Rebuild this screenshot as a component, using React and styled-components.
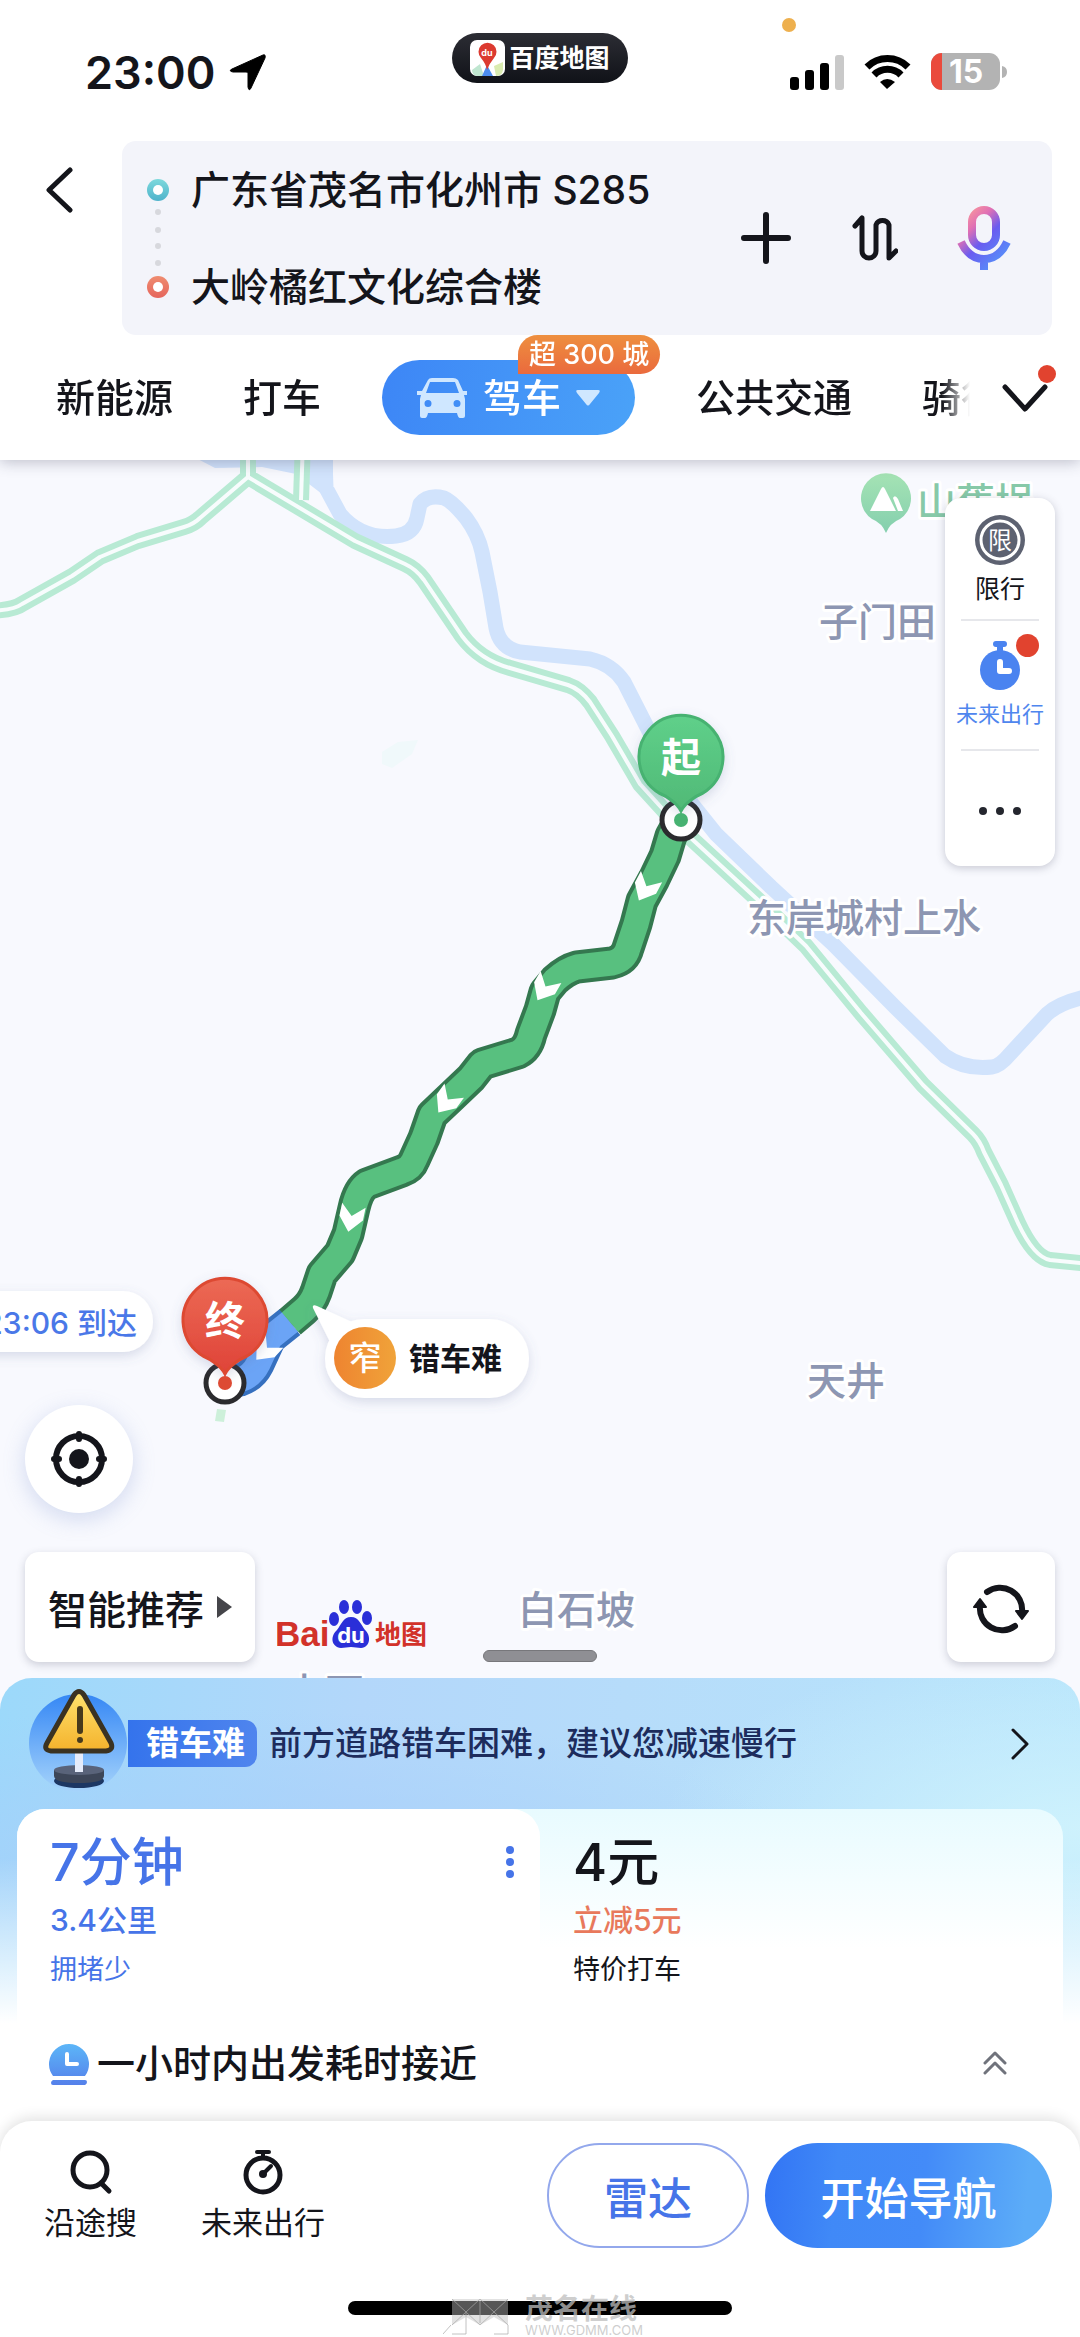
import React, { useState } from 'react';
import styled, { createGlobalStyle, css } from 'styled-components';

const font = `Inter, "Noto Sans CJK SC", sans-serif`;

const GlobalStyle = createGlobalStyle`
  * { box-sizing: border-box; }
  body { margin: 0; background: #fff; color: #14151b; font-family: ${font}; }
  button, input { font: inherit; color: inherit; background: none; border: 0; padding: 0; margin: 0; }
  button { cursor: pointer; }
  svg { display: block; flex: none; }
`;

const Page = styled.main`
  display: flex;
  flex-direction: column;
  min-height: 100vh;
  overflow: hidden;
`;

/* ---------- header ---------- */

const Header = styled.header`
  position: relative;
  z-index: 2;
  background: #fff;
  box-shadow: 0 2px 14px rgba(60, 62, 90, 0.32);
`;

const StatusBar = styled.div`
  display: grid;
  grid-template-columns: 1fr auto 1fr;
  height: 141px;
  padding: 33px 73px 0;
`;

const StatusSide = styled.div`
  display: flex;
  align-items: center;
  justify-content: ${(p) => (p.$end ? 'flex-end' : 'flex-start')};
  gap: ${(p) => (p.$end ? '20px' : '14px')};
  height: 78px;
  padding-left: 12px;
`;

const Clock = styled.time`
  font-size: 45px;
  font-weight: 600;
`;

const Island = styled.div`
  display: flex;
  align-items: center;
  gap: 4px;
  height: 50px;
  padding: 0 18px;
  border-radius: 25px;
  background: linear-gradient(#2c2d34, #101218);
  color: #fff;
  font-size: 25px;
  font-weight: 700;
  line-height: 50px;
`;

const MicDot = styled.i`
  position: absolute;
  top: 18px;
  right: 284px;
  width: 14px;
  height: 14px;
  border-radius: 50%;
  background: #eeb04e;
`;

const SearchRow = styled.div`
  display: flex;
  align-items: flex-start;
  padding-right: 28px;
`;

const BackButton = styled.button`
  display: flex;
  align-items: center;
  justify-content: center;
  width: 122px;
  height: 97px;
  padding-right: 5px;
`;

const SearchBox = styled.div`
  display: flex;
  align-items: center;
  flex: 1;
  min-width: 0;
  height: 194px;
  padding: 0 14px 0 24px;
  border-radius: 14px;
  background: #f3f4fa;
`;

const Stops = styled.div`
  display: flex;
  flex-direction: column;
  flex: 1;
  min-width: 0;
  padding-left: 21px;
`;

const StopInput = styled.input`
  width: 100%;
  height: 97px;
  padding-bottom: 5px;
  font-size: 39px;
  font-weight: 500;
  outline: 0;
`;

const ActionButton = styled.button`
  display: flex;
  align-items: center;
  justify-content: center;
  flex: none;
  width: 109px;
  height: 109px;
`;

const TabRow = styled.nav`
  display: flex;
  height: 125px;
`;

const TabList = styled.div`
  display: flex;
  align-items: center;
  gap: 60px;
  flex: 1;
  min-width: 0;
  padding-left: 51px;
  overflow: hidden;
  mask-image: linear-gradient(to left, transparent, #000 28px);
`;

const Tab = styled.button`
  position: relative;
  flex: none;
  padding: 0 5px;
  font-size: 39px;
  font-weight: 500;
  line-height: 75px;
  white-space: nowrap;
  ${(p) =>
    p.$active &&
    css`
      display: flex;
      align-items: center;
      gap: 15px;
      margin: 0 -4px;
      padding: 0 35px;
      border-radius: 38px;
      color: #fff;
      background: linear-gradient(100deg, #3d86f6, #4aa2f8);
    `}
`;

const PromoBadge = styled.span`
  position: absolute;
  top: -25px;
  left: 136px;
  padding: 0 11px;
  border-radius: 20px 20px 20px 0;
  background: linear-gradient(#ee8f3f, #ea6a3d);
  font-size: 27px;
  line-height: 39px;
`;

const MoreButton = styled.button`
  position: relative;
  display: flex;
  align-items: center;
  justify-content: center;
  width: 110px;
`;

const RedDot = styled.i`
  position: absolute;
  top: ${(p) => p.$top}px;
  right: ${(p) => p.$right}px;
  width: ${(p) => p.$size}px;
  height: ${(p) => p.$size}px;
  border-radius: 50%;
  background: #e1432f;
`;

/* ---------- map ---------- */

const MapArea = styled.section`
  position: relative;
  flex: 1;
  min-height: 1250px;
  background: #f8f9fe;
`;

const MapCanvas = styled.svg`
  position: absolute;
  inset: 0;
  width: 100%;
  height: 100%;
`;

const PlaceName = styled.text`
  font-family: ${font};
  font-size: 39px;
  font-weight: 500;
  fill: ${(p) => p.$color || '#8d96b2'};
  stroke: #fff;
  stroke-width: 6px;
  stroke-linejoin: round;
  paint-order: stroke;
`;

const PinText = styled.text`
  font-family: ${font};
  font-size: ${(p) => p.$size || 40}px;
  font-weight: ${(p) => p.$weight || 500};
  fill: ${(p) => p.$color || '#fff'};
  text-anchor: ${(p) => p.$anchor || 'middle'};
`;

const Overlay = styled.div`
  position: relative;
  display: flex;
  flex-direction: column;
  justify-content: space-between;
  height: 100%;
  min-height: 1250px;
  padding: 38px 25px 48px;
`;

const ToolPanel = styled.div`
  display: flex;
  flex-direction: column;
  align-items: center;
  align-self: flex-end;
  width: 110px;
  height: 368px;
  border-radius: 16px;
  background: #fff;
  box-shadow: 0 2px 8px rgba(50, 55, 80, 0.25);
`;

const PanelButton = styled.button`
  position: relative;
  display: flex;
  flex-direction: column;
  align-items: center;
  justify-content: ${(p) => (p.$center ? 'center' : 'flex-start')};
  width: 100%;
  height: ${(p) => p.$height}px;
  padding-top: ${(p) => p.$top || 0}px;
  font-size: ${(p) => (p.$blue ? 22 : 25)}px;
  line-height: 46px;
  color: ${(p) => (p.$blue ? '#4f86ee' : '#14151b')};
`;

const Rule = styled.i`
  width: 78px;
  height: 2px;
  background: #e6e7eb;
`;

const MapFooter = styled.div`
  display: flex;
  align-items: flex-end;
  gap: 22px;
`;

const FooterLeft = styled.div`
  display: flex;
  flex-direction: column;
  gap: 39px;
`;

const LocateButton = styled.button`
  display: flex;
  align-items: center;
  justify-content: center;
  width: 108px;
  height: 108px;
  border-radius: 50%;
  background: #fff;
  box-shadow: 0 6px 22px rgba(110, 135, 200, 0.28);
`;

const FloatCard = styled.button`
  display: flex;
  align-items: center;
  justify-content: center;
  gap: 13px;
  flex: none;
  width: ${(p) => p.$width}px;
  height: 110px;
  border-radius: 14px;
  background: #fff;
  box-shadow: 0 3px 9px rgba(50, 55, 80, 0.22);
  font-size: 39px;
  font-weight: 500;
`;

const LogoSlot = styled.div`
  flex: 1;
  padding-bottom: 13px;
`;

const DragHandle = styled.i`
  position: absolute;
  bottom: 48px;
  left: 50%;
  width: 114px;
  height: 12px;
  margin-left: -57px;
  border: 1px solid #77777b;
  border-radius: 6px;
  background: #8f8f94;
`;

/* ---------- bottom sheet ---------- */

const Sheet = styled.section`
  position: relative;
  margin-top: -32px;
  border-radius: 32px 32px 0 0;
  background:
    linear-gradient(rgba(255, 255, 255, 0) 180px, #fff 345px),
    radial-gradient(600px 160px at 20% 190px, rgba(166, 207, 250, 0.9), rgba(166, 207, 250, 0)),
    radial-gradient(420px 180px at 100% 150px, rgba(208, 243, 253, 0.9), rgba(208, 243, 253, 0)),
    linear-gradient(95deg, #9cd9fa, #b3d7fa 32%, #b6dcfa 55%, #b8e6fc);
`;

const AlertButton = styled.button`
  display: flex;
  align-items: center;
  width: 100%;
  height: 131px;
  padding: 0 48px 0 28px;
  text-align: left;
`;

const AlertTag = styled.span`
  padding: 0 12px 0 18px;
  border-radius: 0 12px 12px 0;
  background: linear-gradient(95deg, #3473ec, #5085ee);
  color: #fff;
  font-size: 33px;
  font-weight: 700;
  line-height: 47px;
`;

const AlertText = styled.span`
  flex: 1;
  padding-left: 12px;
  color: #1d2c5c;
  font-size: 33px;
  font-weight: 500;
  line-height: 47px;
`;

const Card = styled.div`
  margin: 0 17px;
  border-radius: 28px 28px 0 0;
  background: linear-gradient(#e8fbff, #fff 140px);
`;

const Plans = styled.div`
  display: grid;
  grid-template-columns: 1fr 1fr;
`;

const Plan = styled.button`
  position: relative;
  display: flex;
  flex-direction: column;
  height: 196px;
  padding: 25px 33px 0;
  text-align: left;
  border-radius: 28px 28px 0 0;
  color: ${(p) => (p.$active ? '#4674e8' : '#14151b')};
  background: ${(p) => (p.$active ? '#fff' : 'transparent')};
`;

const PlanTitle = styled.strong`
  font-size: 52px;
  font-weight: 500;
  line-height: 58px;
`;

const PlanSub = styled.span`
  font-size: 30px;
  font-weight: 500;
  line-height: 56px;
  color: ${(p) => p.$color || 'inherit'};
`;

const PlanNote = styled.span`
  font-size: 27px;
  line-height: 44px;
`;

const Kebab = styled.svg`
  position: absolute;
  top: 36px;
  right: 24px;
`;

const DepartRow = styled.button`
  display: flex;
  align-items: center;
  gap: 7px;
  width: 100%;
  height: 116px;
  padding: 0 56px 0 32px;
  background: #fff;
  font-size: 38px;
  font-weight: 500;
`;

const DepartText = styled.span`
  flex: 1;
  padding-bottom: 5px;
  text-align: left;
`;

const BottomBar = styled.footer`
  position: relative;
  display: flex;
  flex-direction: column;
  align-items: center;
  gap: 53px;
  padding: 22px 0;
  border-radius: 32px 32px 0 0;
  background: #fff;
  box-shadow: 0 -3px 14px rgba(0, 0, 0, 0.12);
`;

const BottomRow = styled.div`
  display: flex;
  gap: 16px;
  width: 100%;
  padding: 0 28px 0 44px;
`;

const QuickActions = styled.div`
  display: flex;
  flex: 1;
  gap: 64px;
`;

const QuickButton = styled.button`
  display: flex;
  flex-direction: column;
  align-items: center;
  gap: 6px;
  padding-top: 4px;
  font-size: 31px;
  line-height: 44px;
`;

const PillButton = styled.button`
  width: ${(p) => (p.$primary ? 287 : 202)}px;
  height: 105px;
  border-radius: 53px;
  border: ${(p) => (p.$primary ? '0' : '2px solid #93a8ec')};
  background: ${(p) =>
    p.$primary ? 'linear-gradient(95deg, #3274f4, #4089f7 25%, #438bf8 55%, #5cacf8 90%)' : '#fff'};
  color: ${(p) => (p.$primary ? '#fff' : '#4674e8')};
  font-size: 44px;
  font-weight: 500;
`;

const HomeIndicator = styled.i`
  width: 384px;
  height: 14px;
  border-radius: 7px;
  background: #000;
`;

const Watermark = styled.div`
  position: absolute;
  bottom: 0;
  left: 50%;
  display: flex;
  align-items: flex-end;
  gap: 15px;
  margin-left: -97px;
  color: rgba(190, 190, 190, 0.75);
`;

const WatermarkText = styled.div`
  display: flex;
  flex-direction: column;
  font-size: 13px;
  line-height: 14px;

  b {
    font-size: 28px;
    font-weight: 700;
    line-height: 28px;
  }
`;

const stroke = {
  fill: 'none',
  stroke: '#14151b',
  strokeLinecap: 'round',
  strokeLinejoin: 'round',
};

const greenRoads = [
  'M248 440V477L355 541L405 564Q416 569 424 580L462 636Q480 660 510 668L568 685Q580 689 590 702L612 736L640 784L680 828L758 900L806 946L861 1013L923 1085L973 1134Q980 1141 984 1152L1001 1185L1018 1223Q1034 1257 1050 1260L1090 1264',
  'M248 477L200 518Q194 524 184 527L138 541L100 557L72 576L22 604Q14 610 -10 611',
  'M303 440L301 500',
];

const routeGreen =
  'M680 820L671 836L665 856L654 879L642 901L636 924L628 948Q625 960 612 963L577 967Q566 970 555 980L545 992L540 1010L531 1034Q528 1048 518 1053L482 1064L471 1078L450 1098L432 1115L424 1138L414 1160Q411 1168 402 1171L367 1184Q358 1190 354 1208L348 1234L340 1253L322 1274L316 1292Q312 1303 304 1310L290 1322';
const routeBlue = 'M290 1322L270 1338L258 1364Q252 1376 240 1380L228 1383';

// x, y, heading in degrees from straight down
const arrows = [
  [645, 889, 28],
  [544, 989, 30],
  [446, 1102, 36],
  [351, 1219, 12],
  [265, 1350, 42],
];

const places = [
  { x: 819, y: 636, name: '子门田' },
  { x: 747, y: 932, name: '东岸城村上水' },
  { x: 807, y: 1395, name: '天井' },
  { x: 518, y: 1624, name: '白石坡' },
  { x: 286, y: 1706, name: '上石' },
];

function Pin({ x, y, label, from, to, edge }) {
  const id = `pin-${x}`;
  return (
    <g transform={`translate(${x} ${y})`}>
      <defs>
        <linearGradient id={id} x1="0" y1="0" x2="0" y2="1">
          <stop offset="0" stopColor={from} />
          <stop offset="1" stopColor={to} />
        </linearGradient>
      </defs>
      <circle r="19" fill="#fff" stroke="#2b2b2e" strokeWidth="5" />
      <path
        d="M0 -9Q-3 -15 -10 -20Q-15 -24 -22 -27A42 42 0 1 1 22 -27Q15 -24 10 -20Q3 -15 0 -9Z"
        fill={`url(#${id})`}
        stroke={edge}
        strokeWidth="3"
        filter="url(#soft)"
      />
      <circle r="7" fill={edge} />
      <PinText y="-48" $weight={700}>
        {label}
      </PinText>
    </g>
  );
}

function RouteMap() {
  return (
    <MapCanvas viewBox="0 460 1080 1250" preserveAspectRatio="xMidYMin slice" role="img" aria-label="路线地图">
      <defs>
        <filter id="soft" x="-30%" y="-30%" width="160%" height="170%">
          <feDropShadow dx="0" dy="4" stdDeviation="6" floodColor="#5a6a9a" floodOpacity="0.22" />
        </filter>
        <linearGradient id="narrow" x1="0" x2="1">
          <stop offset="0" stopColor="#ee8430" />
          <stop offset="1" stopColor="#f0a33a" />
        </linearGradient>
        <linearGradient id="park" x1="0" y1="0" x2="0" y2="1">
          <stop offset="0" stopColor="#a5e3b4" />
          <stop offset="1" stopColor="#84cfae" />
        </linearGradient>
      </defs>

      <path d="M382 752L398 742L418 740L412 754L392 768L382 764Z" fill="#f0f9fb" />
      <path d="M190 455H333V492L322 494L296 474L262 467L215 468Z" fill="#d1e3fc" />
      <path
        d="M325 460L326 488L340 514Q362 540 396 536Q414 534 417 518L420 504Q428 494 444 498Q452 501 466 518Q478 534 482 552L490 592L496 628Q500 648 520 652L590 659Q612 664 624 682L651 735L692 804L716 834L771 887L833 944L895 1007L945 1056Q965 1070 992 1067Q1000 1066 1010 1054L1047 1014Q1060 1002 1090 996"
        fill="none"
        stroke="#d1e3fc"
        strokeWidth="15"
        strokeLinejoin="round"
      />
      {greenRoads.map((d) => (
        <path key={d} d={d} fill="none" stroke="#b8ead4" strokeWidth="16" strokeLinejoin="round" />
      ))}
      {greenRoads.map((d) => (
        <path key={d} d={d} fill="none" stroke="#f8fcfd" strokeWidth="4" strokeLinejoin="round" />
      ))}

      {places.map((p) => (
        <PlaceName key={p.name} x={p.x} y={p.y}>
          {p.name}
        </PlaceName>
      ))}
      <PlaceName x="917" y="516" $color="#87c9a8">
        山蕉埚
      </PlaceName>
      <path
        d="M886 533Q882 523 872 519A25 25 0 1 1 900 519Q890 523 886 533Z"
        fill="url(#park)"
      />
      <path d="M870 511L881 489Q883 485 885 489L896 511ZM893 498Q895 494 898 499L903 511H898Z" fill="#fff" />

      <path d="M217 1409L226 1410L224 1422L215 1421Z" fill="#cdf0da" />
      <g fill="none" strokeLinejoin="round">
        <path d={routeBlue} stroke="#3670bf" strokeWidth="33" />
        <path d={routeGreen} stroke="#34784f" strokeWidth="33" />
        <path d={routeBlue} stroke="#6ba4f6" strokeWidth="25" />
        <path d={routeGreen} stroke="#58c07f" strokeWidth="25" />
      </g>
      {arrows.map(([x, y, turn]) => (
        <path
          key={x}
          d="M-12 -14L0 -3L12 -14V-1L0 13L-12 -1Z"
          fill="#fff"
          transform={`translate(${x} ${y}) rotate(${turn})`}
        />
      ))}

      <g filter="url(#soft)">
        <rect x="-40" y="1291" width="193" height="61" rx="30" fill="#fff" />
      </g>
      <PinText x="137" y="1334" $size={30} $color="#4a78e8" $anchor="end">
        23:06 到达
      </PinText>

      <g filter="url(#soft)">
        <rect x="325" y="1319" width="204" height="79" rx="39" fill="#fff" />
        <path d="M313 1308Q312 1304 317 1306L352 1322L330 1342Z" fill="#fff" />
      </g>
      <circle cx="365" cy="1358" r="31" fill="url(#narrow)" />
      <PinText x="365" y="1370" $size={33}>
        窄
      </PinText>
      <PinText x="409" y="1370" $size={31} $weight={700} $color="#14151b" $anchor="start">
        错车难
      </PinText>

      <Pin x={681} y={820} label="起" from="#5fd08a" to="#50b976" edge="#47b271" />
      <Pin x={225} y={1383} label="终" from="#ec6a55" to="#df4338" edge="#dd4a33" />
    </MapCanvas>
  );
}

function BaiduLogo() {
  return (
    <svg width="150" height="50" viewBox="0 0 150 50" fontFamily={font} fontWeight="700">
      <text x="-2" y="47" fontSize="35" fill="#d2322a" fontFamily="Liberation Sans">
        Bai
      </text>
      <g fill="#2a2fd8">
        <ellipse cx="57" cy="20" rx="5" ry="7" />
        <ellipse cx="67" cy="8" rx="5" ry="7" />
        <ellipse cx="80" cy="8" rx="5" ry="7" />
        <ellipse cx="90" cy="19" rx="5" ry="7" />
        <path d="M74 18C82 18 84 26 88 31C94 36 94 48 84 49C80 49 78 48 74 48C70 48 68 49 64 49C54 48 53 37 60 31C64 26 66 18 74 18Z" />
      </g>
      <text x="74" y="44" fontSize="22" fill="#fff" textAnchor="middle">
        du
      </text>
      <text x="98" y="45" fontSize="26" fill="#d2322a">
        地图
      </text>
    </svg>
  );
}

function StatusIcons() {
  return (
    <>
      <svg width="54" height="36" viewBox="0 0 54 36">
        <rect y="23" width="9" height="13" rx="3" />
        <rect x="15" y="16" width="9" height="20" rx="3" />
        <rect x="30" y="9" width="9" height="27" rx="3" />
        <rect x="45" y="1" width="9" height="35" rx="3" fill="#c9c9c9" />
      </svg>
      <svg width="47" height="36" viewBox="0 0 47 36" fill="none" stroke="#000" strokeWidth="7">
        <path d="M3 13A29 29 0 0 1 44 13" />
        <path d="M10 21A19 19 0 0 1 37 21" />
        <path d="M23 35L16 28Q23 22 31 28Z" fill="#000" stroke="none" />
      </svg>
      <svg width="76" height="38" viewBox="0 0 76 38">
        <defs>
          <clipPath id="cell">
            <rect width="69" height="37" rx="11" />
          </clipPath>
        </defs>
        <g clipPath="url(#cell)">
          <rect width="69" height="37" fill="#b3b3b3" />
          <rect width="11" height="37" fill="#ea4a3c" />
        </g>
        <path d="M71 13Q76 14 76 19T71 25Z" fill="#b3b3b3" />
        <text x="35" y="30" textAnchor="middle" fontFamily={font} fontSize="32" fontWeight="700" fill="#fff">
          15
        </text>
      </svg>
    </>
  );
}

function AlertIcon() {
  return (
    <svg width="100" height="110" viewBox="0 0 100 110">
      <defs>
        <linearGradient id="disc" x1="0" y1="0" x2="0" y2="1">
          <stop offset="0" stopColor="#3587f5" />
          <stop offset="1" stopColor="#a6d4fb" />
        </linearGradient>
        <linearGradient id="sign" x1="0" y1="0" x2="0" y2="1">
          <stop offset="0" stopColor="#ffe36e" />
          <stop offset="1" stopColor="#f4b22c" />
        </linearGradient>
      </defs>
      <circle cx="50" cy="54" r="49" fill="url(#disc)" />
      <ellipse cx="51" cy="92" rx="25" ry="7" fill="#1c3763" />
      <path d="M26 81H76V87Q76 94 51 94T26 87Z" fill="#3d4658" />
      <ellipse cx="51" cy="81" rx="25" ry="5" fill="#59637a" />
      <rect x="47" y="60" width="8" height="23" fill="#e6ecfa" />
      <path
        d="M46 6Q51 -1 56 6L83 54Q86 61 78 62H23Q15 61 19 54Z"
        fill="url(#sign)"
        stroke="#3a3222"
        strokeWidth="5"
        strokeLinejoin="round"
      />
      <path d="M52 20V42" stroke="#473a1c" strokeWidth="6" strokeLinecap="round" />
      <circle cx="52" cy="51" r="3" fill="#473a1c" />
    </svg>
  );
}

const tabs = ['新能源', '打车', '驾车', '公共交通', '骑行'];

function App() {
  const [tab, setTab] = useState('驾车');
  const [plan, setPlan] = useState(0);

  return (
    <Page>
      <GlobalStyle />
      <Header>
        <StatusBar>
          <StatusSide>
            <Clock>23:00</Clock>
            <svg width="37" height="37" viewBox="0 0 37 37">
              <path d="M34 1Q37 0 36 4L22 34Q20 38 19 33V19Q19 18 17 18H4Q-1 17 3 15Z" stroke="#000" strokeWidth="1" />
            </svg>
          </StatusSide>
          <Island>
            <svg width="35" height="36" viewBox="0 0 35 36">
              <rect width="35" height="36" rx="7" fill="#fff" />
              <path d="M2 30L10 24L14 36H7Q2 35 2 30Z" fill="#bfe6d0" />
              <path d="M12 36L17 25L23 36Z" fill="#4c8df0" />
              <path d="M24 26L33 22V30Q32 36 26 36Z" fill="#d9ebb0" />
              <path d="M17 30Q16 24 11 18A9 9 0 1 1 24 18Q19 24 17 30Z" fill="#dc3a30" />
              <text x="17" y="16" fontSize="9" fontWeight="700" fill="#fff" textAnchor="middle">
                du
              </text>
            </svg>
            <span>百度地图</span>
          </Island>
          <StatusSide $end>
            <StatusIcons />
          </StatusSide>
          <MicDot />
        </StatusBar>

        <SearchRow>
          <BackButton aria-label="返回">
            <svg width="30" height="46" viewBox="0 0 30 46" {...stroke} strokeWidth="5">
              <path d="M26 3L5 23L26 43" />
            </svg>
          </BackButton>
          <SearchBox>
            <svg width="24" height="194" viewBox="0 0 24 194">
              <defs>
                <linearGradient id="from" x1="0" y1="0" x2="0" y2="1">
                  <stop offset="0" stopColor="#7dd9dc" />
                  <stop offset="1" stopColor="#4fb3cb" />
                </linearGradient>
                <linearGradient id="to" x1="0" y1="0" x2="0" y2="1">
                  <stop offset="0" stopColor="#ef8c70" />
                  <stop offset="1" stopColor="#e5655c" />
                </linearGradient>
              </defs>
              <circle cx="12" cy="49" r="11" fill="url(#from)" />
              <circle cx="12" cy="49" r="5" fill="#fff" />
              {[71, 89, 105, 122].map((y) => (
                <circle key={y} cx="12" cy={y} r="3" fill="#d7d8dd" />
              ))}
              <circle cx="12" cy="146" r="11" fill="url(#to)" />
              <circle cx="12" cy="146" r="5" fill="#fff" />
            </svg>
            <Stops>
              <StopInput aria-label="起点" defaultValue="广东省茂名市化州市 S285" />
              <StopInput aria-label="终点" defaultValue="大岭橘红文化综合楼" />
            </Stops>
            <ActionButton aria-label="添加途经点">
              <svg width="52" height="54" viewBox="0 0 52 54" {...stroke} strokeWidth="6">
                <path d="M4 27H48M26 4V50" />
              </svg>
            </ActionButton>
            <ActionButton aria-label="交换起终点">
              <svg width="46" height="48" viewBox="0 0 46 48" {...stroke} strokeWidth="5">
                <path d="M3 12L10 4V37A7 7 0 0 0 24 37V11A7 7 0 0 1 37 11V44L44 37" />
              </svg>
            </ActionButton>
            <ActionButton aria-label="语音输入">
              <svg width="54" height="66" viewBox="0 0 54 66" fill="none">
                <defs>
                  <linearGradient id="mic" gradientUnits="userSpaceOnUse" x1="6" y1="8" x2="46" y2="48">
                    <stop offset="0" stopColor="#fb9a9a" />
                    <stop offset="0.3" stopColor="#e070b4" />
                    <stop offset="0.6" stopColor="#6a5cf0" />
                    <stop offset="1" stopColor="#5a86f8" />
                  </linearGradient>
                </defs>
                <rect x="15" y="5" width="24" height="37" rx="12" stroke="url(#mic)" strokeWidth="8" />
                <path d="M4 37Q12 54 27 54T50 37M27 54V65" stroke="url(#mic)" strokeWidth="8" />
              </svg>
            </ActionButton>
          </SearchBox>
        </SearchRow>

        <TabRow>
          <TabList>
            {tabs.map((name) =>
              name === tab ? (
                <Tab key={name} $active>
                  <svg width="51" height="40" viewBox="0 0 51 40">
                    <path
                      d="M11 2Q12 0 15 0H36Q39 0 41 2L46 13L50 13V17H47L48 21V38Q48 40 46 40H43Q41 40 40 35H11Q10 40 8 40H5Q3 40 3 38V21L4 17H0V13L5 13ZM13 4L9 15H42L38 4ZM11 22A3 3 0 1 0 11 29A3 3 0 1 0 11 22ZM40 22A3 3 0 1 0 40 29A3 3 0 1 0 40 22Z"
                      fill="#cfe7ff"
                      fillRule="evenodd"
                    />
                  </svg>
                  {name}
                  <svg width="24" height="16" viewBox="0 0 24 16">
                    <path d="M2 0H22Q25 0 23 3L14 14Q12 17 10 14L1 3Q-1 0 2 0Z" fill="#cfe7ff" />
                  </svg>
                  <PromoBadge>超 300 城</PromoBadge>
                </Tab>
              ) : (
                <Tab key={name} onClick={() => setTab(name)}>
                  {name}
                </Tab>
              )
            )}
          </TabList>
          <MoreButton aria-label="更多方式">
            <svg width="46" height="30" viewBox="0 0 46 30" {...stroke} strokeWidth="5">
              <path d="M3 4L23 26L43 4" />
            </svg>
            <RedDot $top={30} $right={24} $size={18} />
          </MoreButton>
        </TabRow>
      </Header>

      <MapArea>
        <RouteMap />
        <Overlay>
          <ToolPanel>
            <PanelButton $height={121} $top={17}>
              <svg width="51" height="51" viewBox="0 0 51 51">
                <circle cx="25" cy="25" r="25" fill="#5d6271" />
                <circle cx="25" cy="25" r="19" fill="none" stroke="#fff" strokeWidth="3" />
                <text x="25" y="34" fontFamily={font} fontSize="24" fill="#fff" textAnchor="middle">
                  限
                </text>
              </svg>
              限行
            </PanelButton>
            <Rule />
            <PanelButton $height={128} $top={20} $blue>
              <svg width="42" height="50" viewBox="0 0 42 50">
                <circle cx="21" cy="29" r="20" fill="#4a83f0" />
                <path d="M17 3H25M21 3V12" stroke="#4a83f0" strokeWidth="6" strokeLinecap="round" />
                <path d="M21 21V30H30" fill="none" stroke="#fff" strokeWidth="6" strokeLinecap="round" strokeLinejoin="round" />
              </svg>
              未来出行
              <RedDot $top={13} $right={16} $size={23} />
            </PanelButton>
            <Rule />
            <PanelButton $height={115} $top={6} $center aria-label="更多">
              <svg width="42" height="9" viewBox="0 0 42 9" fill="#24262e">
                <circle cx="4" cy="4" r="4" />
                <circle cx="21" cy="4" r="4" />
                <circle cx="38" cy="4" r="4" />
              </svg>
            </PanelButton>
          </ToolPanel>

          <MapFooter>
            <FooterLeft>
              <LocateButton aria-label="定位">
                <svg width="56" height="56" viewBox="0 0 56 56" {...stroke} strokeWidth="6">
                  <circle cx="28" cy="28" r="23" />
                  <circle cx="28" cy="28" r="10" fill="#14151b" stroke="none" />
                  <path d="M28 3V8M28 48V53M3 28H8M48 28H53" />
                </svg>
              </LocateButton>
              <FloatCard $width={230}>
                智能推荐
                <svg width="15" height="22" viewBox="0 0 15 22">
                  <path d="M0 0L15 11L0 22Z" fill="#45454a" />
                </svg>
              </FloatCard>
            </FooterLeft>
            <LogoSlot>
              <BaiduLogo />
            </LogoSlot>
            <FloatCard $width={108} aria-label="刷新">
              <svg width="58" height="56" viewBox="0 -4 58 56" {...stroke} strokeWidth="6">
                <path d="M15 9A22 22 0 0 1 50 29M43 43A22 22 0 0 1 8 23" />
                <path d="M44 28H56L50 36ZM2 24H14L8 16Z" fill="#14151b" strokeWidth="2" />
              </svg>
            </FloatCard>
          </MapFooter>
        </Overlay>
        <DragHandle />
      </MapArea>

      <Sheet>
        <AlertButton>
          <AlertIcon />
          <AlertTag>错车难</AlertTag>
          <AlertText>前方道路错车困难，建议您减速慢行</AlertText>
          <svg width="24" height="34" viewBox="0 0 24 34" {...stroke} strokeWidth="3">
            <path d="M5 3L19 17L5 31" />
          </svg>
        </AlertButton>

        <Card>
          <Plans>
            <Plan $active={plan === 0} onClick={() => setPlan(0)}>
              <PlanTitle>7分钟</PlanTitle>
              <PlanSub>3.4公里</PlanSub>
              <PlanNote>拥堵少</PlanNote>
              <Kebab width="12" height="34" viewBox="0 0 12 34" fill="#4674e8">
                <circle cx="6" cy="5" r="4" />
                <circle cx="6" cy="17" r="4" />
                <circle cx="6" cy="29" r="4" />
              </Kebab>
            </Plan>
            <Plan $active={plan === 1} onClick={() => setPlan(1)}>
              <PlanTitle>4元</PlanTitle>
              <PlanSub $color="#e8795c">立减5元</PlanSub>
              <PlanNote>特价打车</PlanNote>
            </Plan>
          </Plans>
          <DepartRow>
            <svg width="41" height="43" viewBox="0 0 41 43">
              <defs>
                <linearGradient id="alarm" x1="0" y1="0" x2="0" y2="1">
                  <stop offset="0" stopColor="#5cb6f8" />
                  <stop offset="1" stopColor="#5580ea" />
                </linearGradient>
              </defs>
              <path
                d="M4 34A20 20 0 1 1 36 34ZM4 38H36Q38 38 38 40T36 43H4Q2 43 2 41T4 38Z"
                fill="url(#alarm)"
              />
              <path d="M18 12V22H28" fill="none" stroke="#fff" strokeWidth="4" strokeLinecap="round" strokeLinejoin="round" />
            </svg>
            <DepartText>一小时内出发耗时接近</DepartText>
            <svg width="24" height="24" viewBox="0 0 24 24" {...stroke} stroke="#70737c" strokeWidth="3">
              <path d="M2 12L12 2L22 12M2 22L12 12L22 22" />
            </svg>
          </DepartRow>
        </Card>

        <BottomBar>
          <BottomRow>
            <QuickActions>
              <QuickButton>
                <svg width="44" height="48" viewBox="0 0 44 48" {...stroke} strokeWidth="5">
                  <circle cx="21" cy="23" r="17" />
                  <path d="M32 36L40 44" />
                </svg>
                沿途搜
              </QuickButton>
              <QuickButton>
                <svg width="44" height="48" viewBox="0 0 44 48" {...stroke} strokeWidth="5">
                  <circle cx="22" cy="28" r="17" />
                  <path d="M16 5H28M22 5V10" strokeWidth="4" />
                  <path d="M22 27L30 19" strokeWidth="4" />
                  <circle cx="22" cy="27" r="4" fill="#14151b" stroke="none" />
                </svg>
                未来出行
              </QuickButton>
            </QuickActions>
            <PillButton>雷达</PillButton>
            <PillButton $primary>开始导航</PillButton>
          </BottomRow>
          <HomeIndicator />
          <Watermark>
            <svg width="67" height="38" viewBox="0 0 67 38" fill="none" stroke="rgba(170,170,170,0.7)">
              <path d="M9 0H65V26L51 18L37 26L23 18L9 26Z" fill="rgba(190,190,190,0.45)" stroke="none" />
              <path d="M9 0L37 26L65 0M9 26L37 0L65 26M23 14V35H9M51 14M65 26V35H51M37 2V24M0 35L8 26" />
            </svg>
            <WatermarkText>
              <b>茂名在线</b>
              WWW.GDMM.COM
            </WatermarkText>
          </Watermark>
        </BottomBar>
      </Sheet>
    </Page>
  );
}

export default App;
